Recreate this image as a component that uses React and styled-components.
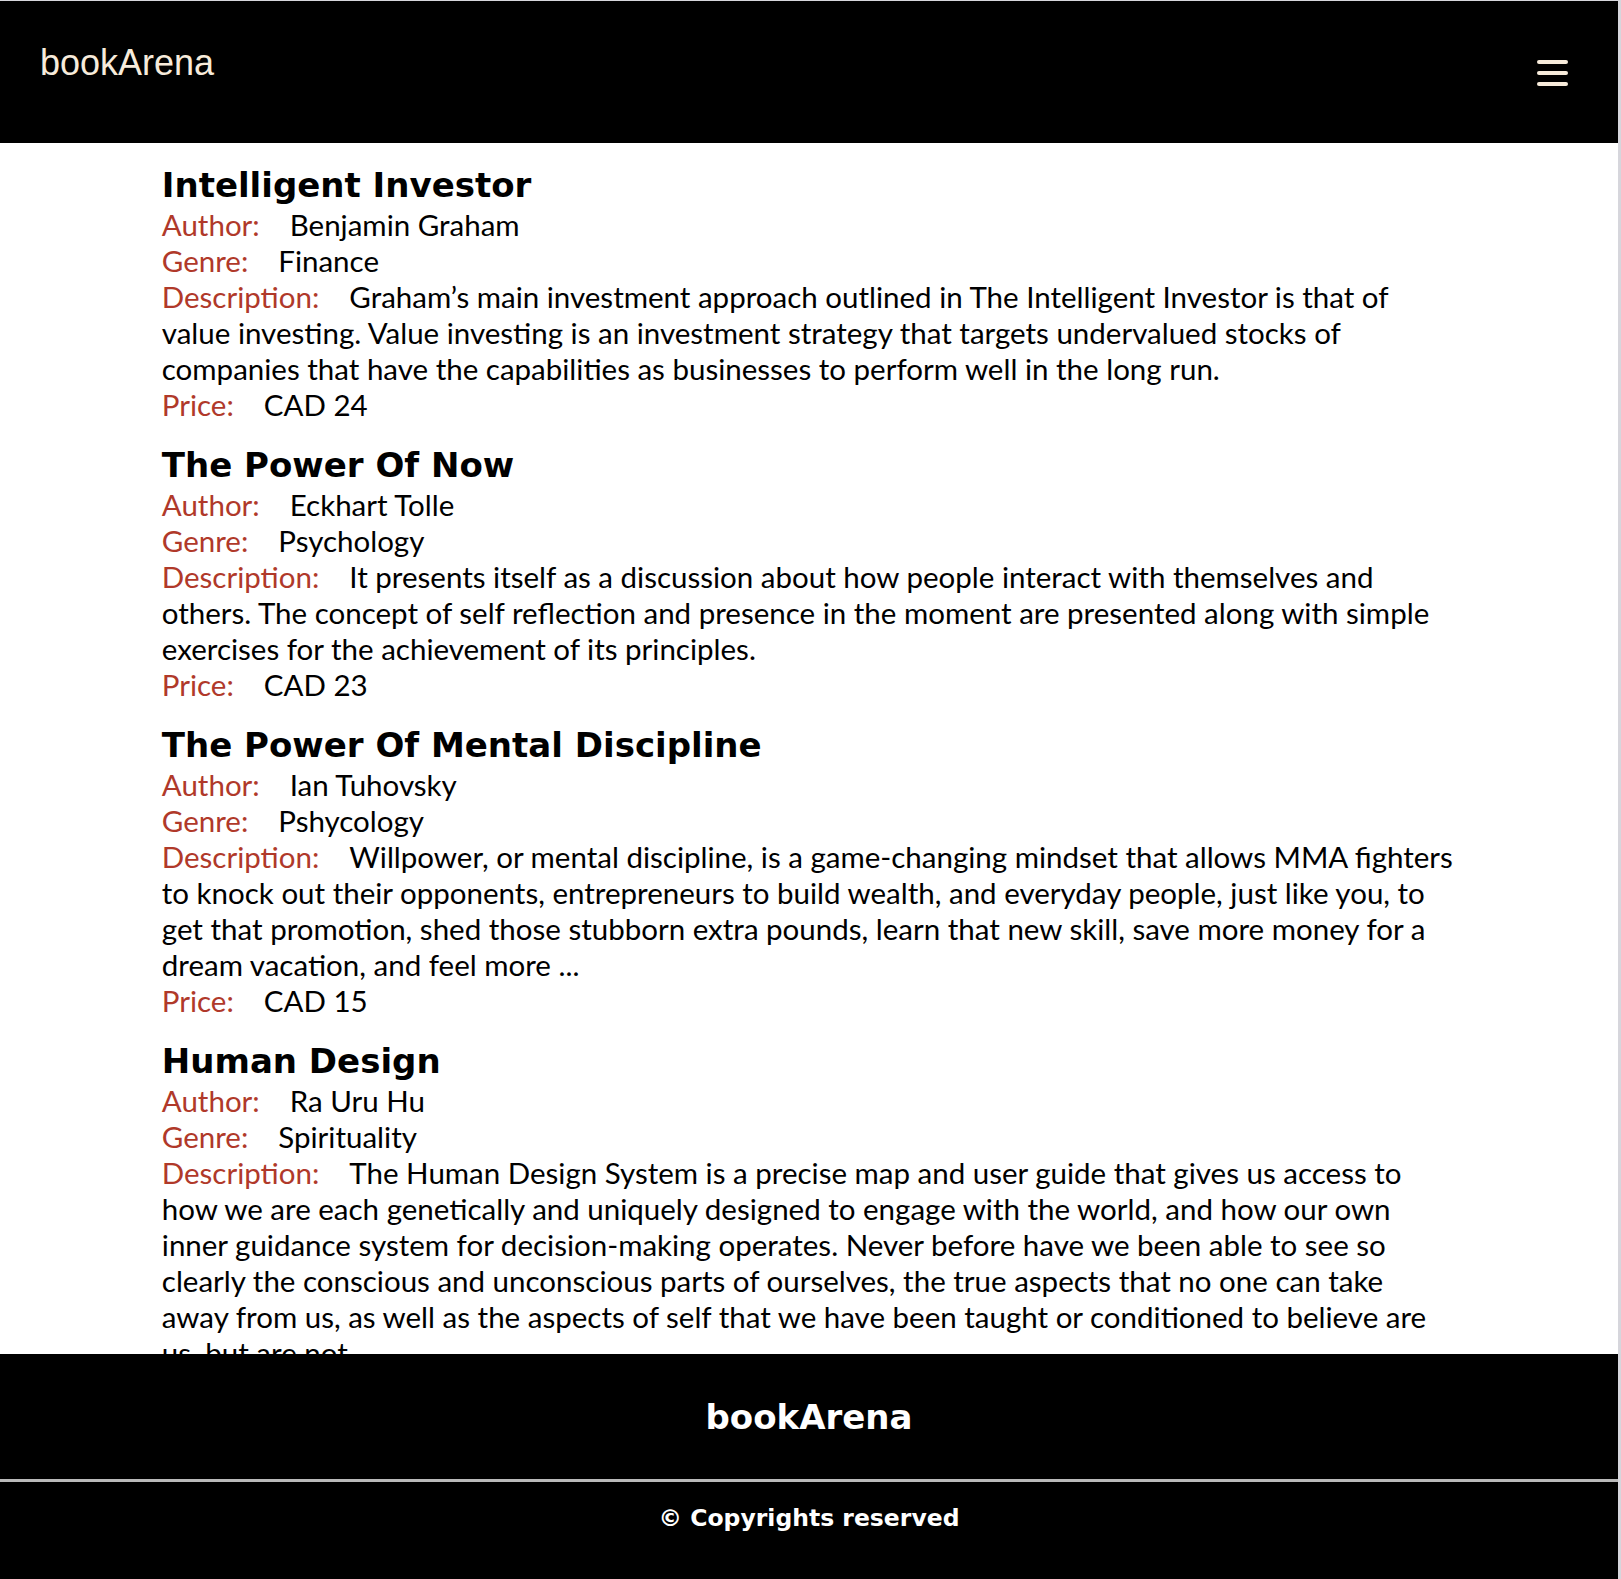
import React from 'react'
import styled, { createGlobalStyle } from 'styled-components'

const GlobalStyle = createGlobalStyle`
  html {
    background: #d6d6dc;
  }
  body {
    margin: 1px 3px 0 0;
    background: #ffffff;
    font-family: Lato, 'Open Sans', sans-serif;
    overflow: hidden;
  }
`

const books = [
  {
    title: 'Intelligent Investor',
    author: 'Benjamin Graham',
    genre: 'Finance',
    description:
      'Graham’s main investment approach outlined in The Intelligent Investor is that of value investing. Value investing is an investment strategy that targets undervalued stocks of companies that have the capabilities as businesses to perform well in the long run.',
    price: 'CAD 24',
  },
  {
    title: 'The Power Of Now',
    author: 'Eckhart Tolle',
    genre: 'Psychology',
    description:
      'It presents itself as a discussion about how people interact with themselves and others. The concept of self reflection and presence in the moment are presented along with simple exercises for the achievement of its principles.',
    price: 'CAD 23',
  },
  {
    title: 'The Power Of Mental Discipline',
    author: 'Ian Tuhovsky',
    genre: 'Pshycology',
    description:
      'Willpower, or mental discipline, is a game-changing mindset that allows MMA fighters to knock out their opponents, entrepreneurs to build wealth, and everyday people, just like you, to get that promotion, shed those stubborn extra pounds, learn that new skill, save more money for a dream vacation, and feel more ...',
    price: 'CAD 15',
  },
  {
    title: 'Human Design',
    author: 'Ra Uru Hu',
    genre: 'Spirituality',
    description:
      'The Human Design System is a precise map and user guide that gives us access to how we are each genetically and uniquely designed to engage with the world, and how our own inner guidance system for decision-making operates. Never before have we been able to see so clearly the conscious and unconscious parts of ourselves, the true aspects that no one can take away from us, as well as the aspects of self that we have been taught or conditioned to believe are us, but are not.',
    price: 'CAD 30',
  },
]

const Header = styled.header`
  display: flex;
  align-items: center;
  justify-content: space-between;
  height: 142px;
  padding: 0 50px 0 40px;
  background: #000000;
`

const Brand = styled.div`
  margin-bottom: 18px;
  font-family: 'Liberation Sans', Arial, sans-serif;
  font-size: 36px;
  color: #f7ebdb;
`

const MenuButton = styled.button`
  display: flex;
  flex-direction: column;
  gap: 7px;
  margin-top: 2px;
  padding: 0;
  border: none;
  background: none;
  cursor: pointer;

  span {
    display: block;
    width: 31px;
    height: 4px;
    border-radius: 2px;
    background: #f7ebdb;
  }
`

const Main = styled.main`
  width: 80%;
  margin: 0 auto;
  padding: 20px 0 300px;
`

const Book = styled.article`
  margin-bottom: 20px;
`

const Title = styled.h2`
  margin: 0;
  font-family: 'DejaVu Sans', sans-serif;
  font-size: 34px;
  line-height: 44px;
  font-weight: 700;
  color: #000000;
`

const Line = styled.p`
  margin: 0;
  font-size: 29.5px;
  line-height: 36px;
  color: #000000;
`

const Label = styled.span`
  margin-right: 30px;
  color: #b0392a;
`

const Footer = styled.footer`
  position: fixed;
  left: 0;
  right: 3px;
  bottom: 0;
  background: #000000;
  color: #ffffff;
  text-align: center;
  font-family: 'DejaVu Sans', sans-serif;
  font-weight: 700;
`

const FooterBrand = styled.div`
  display: flex;
  align-items: center;
  justify-content: center;
  height: 125px;
  border-bottom: 3px solid #b9b9b9;
  font-size: 34px;
`

const Copyright = styled.div`
  padding: 18px 0 43px;
  font-size: 23.5px;
  line-height: 36px;
`

function BookItem({ book }) {
  return (
    <Book>
      <Title>{book.title}</Title>
      <Line>
        <Label>Author:</Label>
        {book.author}
      </Line>
      <Line>
        <Label>Genre:</Label>
        {book.genre}
      </Line>
      <Line>
        <Label>Description:</Label>
        {book.description}
      </Line>
      <Line>
        <Label>Price:</Label>
        {book.price}
      </Line>
    </Book>
  )
}

export default function App() {
  return (
    <>
      <GlobalStyle />
      <Header>
        <Brand>bookArena</Brand>
        <MenuButton aria-label="menu">
          <span />
          <span />
          <span />
        </MenuButton>
      </Header>
      <Main>
        {books.map((book) => (
          <BookItem key={book.title} book={book} />
        ))}
      </Main>
      <Footer>
        <FooterBrand>bookArena</FooterBrand>
        <Copyright>© Copyrights reserved</Copyright>
      </Footer>
    </>
  )
}
